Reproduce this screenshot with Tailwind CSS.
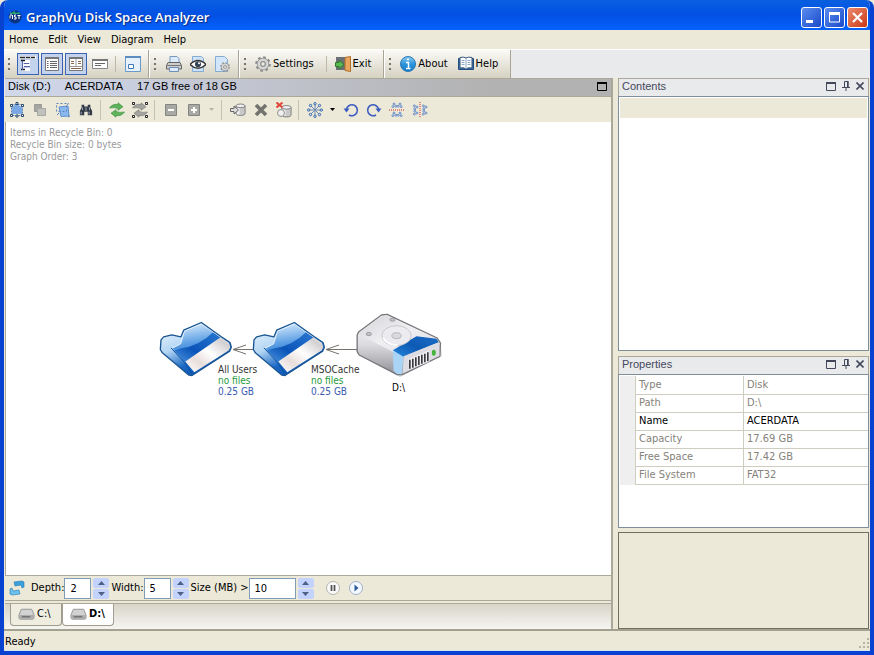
<!DOCTYPE html>
<html lang="en">
<head>
    <meta charset="UTF-8">
    <meta name="viewport" content="width=device-width, initial-scale=1.0">
    <title>GraphVu Disk Space Analyzer</title>
    <script src="https://cdn.jsdelivr.net/npm/@tailwindcss/browser@4"></script>
</head>
<body class="bg-[#ece9d8] font-['DejaVu_Sans_Condensed','DejaVu_Sans',sans-serif] text-[11px] leading-4 text-black">

<!-- Shared icons (kept rendered at zero size, gradients do not work from a hidden svg) -->
<svg class="absolute size-0">
    <defs>
        <linearGradient id="folderFace" x1="0.3" y1="0" x2="0.5" y2="1">
            <stop offset="0" stop-color="#d6eafc"/><stop offset="0.5" stop-color="#5c9fe4"/><stop offset="1" stop-color="#1560c0"/>
        </linearGradient>
        <linearGradient id="folderShade" x1="0" y1="1" x2="1" y2="0">
            <stop offset="0" stop-color="#4a94e2"/><stop offset="0.4" stop-color="#0a54b8"/><stop offset="1" stop-color="#2a78d0"/>
        </linearGradient>
        <linearGradient id="folderBack" x1="0" y1="0" x2="0.6" y2="1">
            <stop offset="0" stop-color="#f4faff"/><stop offset="0.45" stop-color="#b4d6f4"/><stop offset="0.75" stop-color="#1a68c4"/><stop offset="1" stop-color="#0b55b0"/>
        </linearGradient>
        <linearGradient id="folderBand" x1="0" y1="1" x2="1" y2="0">
            <stop offset="0" stop-color="#ffffff"/><stop offset="0.3" stop-color="#e8dedc"/><stop offset="0.55" stop-color="#ffffff"/><stop offset="0.85" stop-color="#d3d0d2"/><stop offset="1" stop-color="#f4f4f6"/>
        </linearGradient>
        <linearGradient id="diskTop" x1="0" y1="0" x2="1" y2="1">
            <stop offset="0" stop-color="#d4d4d8"/><stop offset="0.5" stop-color="#f0f0f3"/><stop offset="1" stop-color="#dcdce0"/>
        </linearGradient>
        <linearGradient id="diskSide" x1="0" y1="0" x2="0" y2="1">
            <stop offset="0" stop-color="#ffffff"/><stop offset="0.5" stop-color="#dcdce0"/><stop offset="1" stop-color="#8f8f96"/>
        </linearGradient>
        <linearGradient id="diskBlue" x1="0" y1="1" x2="1" y2="0">
            <stop offset="0" stop-color="#2a8ae0"/><stop offset="0.5" stop-color="#0d5ab4"/><stop offset="1" stop-color="#1c6cc4"/>
        </linearGradient>
        <linearGradient id="infoBlue" x1="0" y1="0" x2="0" y2="1">
            <stop offset="0" stop-color="#8fd0f4"/><stop offset="0.5" stop-color="#2c94da"/><stop offset="1" stop-color="#1a7cc8"/>
        </linearGradient>

        <symbol id="folder" viewBox="28 50 222 170">
            <path d="M34 106 42 97 66 91 94 97 102 77 155 54 214 96 241 114 245 128 240 140 127 213 118 212 38 145 32 135Z" fill="url(#folderBack)"/>
            <path d="M68 131 93 118 104 80 155 58 213 98 107 171Z" fill="url(#folderFace)"/>
            <path d="M74 138 92 132Q150 124 190 83L213 98 107 171Z" fill="url(#folderShade)"/>
            <path d="M68 131 93 118 104 80 155 58 213 98" fill="none" stroke="#e6f3ff" stroke-width="3"/>
            <path d="M107 171 213 98 238 115 242 128 237 138 134 203Z" fill="url(#folderBand)"/>
            <path d="M64 130 105 174 126 206" fill="none" stroke="#0d4c9c" stroke-width="3"/>
            <path d="M34 106 42 97 66 91 94 97 102 77 155 54 214 96 241 114 245 128 240 140 127 213 118 212 38 145 32 135Z" fill="none" stroke="#1a5592" stroke-width="4" stroke-linejoin="round"/>
        </symbol>
        <symbol id="disk" viewBox="200 22 255 192">
            <path d="M212 146 330 214 456 150 452 108 300 30Z" fill="#9a9aa0" opacity=".45"/>
            <path d="M202 88 207 78 275 28 292 26 442 97 452 112 450 152 337 207 322 207 208 148 202 138Z" fill="url(#diskSide)" stroke="#77777c" stroke-width="4" stroke-linejoin="round"/>
            <path d="M206 86 212 78 277 31 292 30 436 98 320 144Z" fill="url(#diskTop)"/>
            <path d="M309 134 380 92 440 99 447 110 342 152 336 158Z" fill="url(#diskBlue)"/>
            <path d="M309 134 341 153 336 206 322 205 311 196Z" fill="#a9d4f6"/>
            <path d="M342 152 447 110 449 150 338 204Z" fill="#dcdce2"/>
            <path d="M356 160 418 134 419 168 357 192Z" fill="#f0f0f2"/>
            <path d="M360 162v27M369 159v27M378 155v27M387 151v27M396 147v27M405 144v26M414 140v27" stroke="#3a3a40" stroke-width="5"/>
            <ellipse cx="432" cy="141" rx="6" ry="9" fill="#44b43c"/>
            <ellipse cx="320" cy="90" rx="44" ry="30" fill="#ececf0" stroke="#b4b4ba" stroke-width="2"/>
            <ellipse cx="320" cy="90" rx="14" ry="9" fill="#dadade" stroke="#a0a0a6" stroke-width="2"/>
            <path d="M280 96c6 14 24 24 44 22" fill="none" stroke="#fff" stroke-width="5"/>
            <g fill="#c2c2c8" stroke="#85858b" stroke-width="2"><ellipse cx="308" cy="42" rx="8" ry="5"/><ellipse cx="237" cy="85" rx="8" ry="5"/></g>
        </symbol>
        <symbol id="drive" viewBox="0 0 18 12">
            <path d="M3.500 1h11l2.500 6v3q0 1.500-1.500 1.500h-13q-1.500 0-1.500-1.500v-3z" fill="#d2d2d2" stroke="#959595"/>
            <path d="M1.500 7h15v3q0 1-1 1h-13q-1 0-1-1z" fill="#acacac"/><path d="M4 9h9" stroke="#555"/>
        </symbol>
        <symbol id="gear" viewBox="0 0 16 16">
            <circle cx="8" cy="8" r="6.600" fill="none" stroke="#8c8c8c" stroke-width="2.400" stroke-dasharray="2.600 2.580"/>
            <circle cx="8" cy="8" r="4.200" fill="none" stroke="#8c8c8c" stroke-width="4"/>
            <circle cx="8" cy="8" r="4.200" fill="none" stroke="#d6d6d6" stroke-width="2.600"/>
            <circle cx="8" cy="8" r="2.200" fill="#efeee6" stroke="#8c8c8c"/>
        </symbol>
        <symbol id="float" viewBox="0 0 10 9"><path d="M.5.5h9v8h-9z" fill="none" stroke="currentColor"/><path d="M0 0h10v2H0z" fill="currentColor"/></symbol>
        <symbol id="pin" viewBox="0 0 8 10"><path d="M2.500 6V.5h3.500V6M0 6.500h8M4 7v3" fill="none" stroke="currentColor"/><path d="M5 0h1.500v6H5z" fill="currentColor"/></symbol>
        <symbol id="cross" viewBox="0 0 8 8"><path d="M.5.5l7 7M7.500.5l-7 7" stroke="currentColor" stroke-width="1.600"/></symbol>
        <symbol id="handles" viewBox="0 0 16 16">
            <g fill="#fff" stroke="#28486c"><path d="M1.500 2.500h2v2h-2zM7 .5h2v2H7zM12.500 2.500h2v2h-2zM1.500 12.500h2v2h-2zM7 13h2v2H7zM12.500 12.500h2v2h-2z"/></g>
        </symbol>
        <symbol id="arrows" viewBox="0 0 16 16">
            <path d="M.5 6q3-4.500 8.500-3.500V.8l5 4-5 3.500V6.500Q5 5 .5 6z"/><path d="M15.500 10q-3 4.500-8.500 3.500v1.700l-5-4 5-3.500v1.800q4 1.500 8.500.5z"/>
        </symbol>
        <symbol id="bin" viewBox="0 0 12 14"><path d="M1 3v8q0 2.500 5 2.500t5-2.500V3z" fill="#c8c8c8" stroke="#7c7c7c"/><path d="M2 4.500v7q1 1 3 1V5z" fill="#f0f0f0"/><ellipse cx="6" cy="3" rx="5" ry="2" fill="#f0f0f0" stroke="#7c7c7c"/></symbol>
        <symbol id="nodes" viewBox="0 0 16 8"><g fill="#d8e8fa" stroke="#4a74b8"><circle cx="4" cy="2" r="1.300"/><circle cx="12" cy="2" r="1.300"/><circle cx="2.500" cy="5.500" r="1.300"/><circle cx="6.500" cy="5" r="1.300"/><circle cx="9.500" cy="5" r="1.300"/><circle cx="13.500" cy="5.500" r="1.300"/></g></symbol>
        <symbol id="grip" viewBox="0 0 3 12"><path d="M0 0h2v2H0zM0 5h2v2H0zM0 10h2v2H0z" fill="#77756a"/></symbol>
    </defs>
</svg>

<div class="flex h-screen flex-col overflow-hidden rounded-t-lg border-4 border-t-0 border-[#0842d0] bg-[#ece9d8]">

    <!-- Title bar -->
    <header class="-mx-1 flex h-[30px] shrink-0 items-center bg-linear-to-b from-[#0a5fe0] via-[#0350e4] to-[#0562fc] pr-1.5 pl-2">
        <svg class="mt-1 mr-1 size-3.5" viewBox="0 0 14 14"><circle cx="7" cy="7" r="6.500" fill="#0b3480"/><path d="M2 2l2 1 2-2 2 2 3-1 1 2H2z" fill="#2aa878"/><path d="M2 5.500v3M4.500 5v4M2 5h2M8 5H6.500v2H8v2H6M9.500 5.500h3M11 5.500V9" stroke="#fff" fill="none"/></svg>
        <h1 class="mt-1 font-['Open_Sans',sans-serif] text-[13px] font-semibold text-white [text-shadow:1px_1px_1px_#0a2a80]">GraphVu Disk Space Analyzer</h1>
        <div class="mt-1 ml-auto flex gap-0.5">
            <button aria-label="Minimize" class="size-[21px] rounded-[3px] border border-white bg-linear-to-br from-[#5b8cf0] to-[#1a48c8]"><svg viewBox="0 0 19 19"><path d="M4 12h7v3H4z" fill="#fff"/></svg></button>
            <button aria-label="Maximize" class="size-[21px] rounded-[3px] border border-white bg-linear-to-br from-[#5b8cf0] to-[#1a48c8]"><svg viewBox="0 0 19 19"><path d="M4.500 5h10v9h-10z" fill="none" stroke="#fff"/><path d="M4 4h11v3H4z" fill="#fff"/></svg></button>
            <button aria-label="Close" class="size-[21px] rounded-[3px] border border-white bg-linear-to-br from-[#ec8a6c] to-[#c83410]"><svg viewBox="0 0 19 19"><path d="M5 5l9 9M14 5l-9 9" stroke="#fff" stroke-width="2.200"/></svg></button>
        </div>
    </header>

    <!-- Menu -->
    <nav class="flex h-5 shrink-0 items-center gap-2.5 border-b border-white px-[5px]">
        <a href="#">Home</a>
        <a href="#">Edit</a>
        <a href="#">View</a>
        <a href="#">Diagram</a>
        <a href="#">Help</a>
    </nav>

    <!-- Main toolbar -->
    <div class="flex h-7 shrink-0 bg-[#e9eaec]">
        <div class="flex items-center border-r border-[#a8a594] bg-linear-to-b from-[#fbfaf6] to-[#d5d2c2] pr-1 pl-1">
            <svg class="mr-1.5 h-3 w-[3px]"><use href="#grip"/></svg>
            <div class="flex gap-0.5">
                <button aria-label="Tree" class="grid size-[22px] place-items-center border border-[#3c64b4] bg-[#c3d3ee]"><svg class="size-4" viewBox="0 0 16 16"><path d="M0 0h5v3H0zM6 0h4v3H6zM11 0h5v3h-5zM2 4h8v3H2zM2 8h8v3H2zM2 12h8v3H2z" fill="#fff"/><path d="M0 1.500h5M6 1.500h4M11 1.500h4M1 4.500h4M1 13.500h4" stroke="#222" stroke-width="1.500"/><path d="M2.500 5v9M4 7.500h5M4 10.500h6" stroke="#5560a8"/></svg></button>
                <button aria-label="List" class="grid size-[22px] place-items-center border border-[#3c64b4] bg-[#c3d3ee]"><svg class="size-4" viewBox="0 0 16 16"><path d="M1.500 1.500h13v13h-13z" fill="#fff" stroke="#777"/><path d="M1 2h14" stroke="#777" stroke-width="2"/><path d="M3 5.500h1.500M6 5.500h7M3 7.500h1.500M6 7.500h7M3 9.500h1.500M6 9.500h7M3 11.500h1.500M6 11.500h7" stroke="#666"/></svg></button>
                <button aria-label="Columns" class="grid size-[22px] place-items-center border border-[#3c64b4] bg-[#c3d3ee]"><svg class="size-4" viewBox="0 0 16 16"><path d="M1.500 1.500h13v13h-13z" fill="#fff" stroke="#777"/><path d="M1 2h14" stroke="#777" stroke-width="2"/><path d="M8 3v7M2 10.500h12" stroke="#999"/><path d="M3 5.500h3M10 5.500h3M3 7.500h3M10 7.500h3M3 12.500h10" stroke="#86664e"/></svg></button>
                <button aria-label="Caption" class="grid size-[22px] place-items-center"><svg class="size-4" viewBox="0 0 16 16"><path d="M.5 3.500h15v9H.5z" fill="#fff" stroke="#888"/><path d="M0 4h16" stroke="#777" stroke-width="2"/><path d="M3 7.500h10M3 9.500h6" stroke="#666"/></svg></button>
            </div>
            <span class="mx-1 h-4 w-px bg-[#bdbaa9]"></span>
            <button aria-label="Overview" class="ml-0.5 grid size-[22px] place-items-center"><svg class="size-4" viewBox="0 0 16 16"><path d="M.5.5h15v15H.5z" fill="#e6f1fc" stroke="#6a9bc8"/><path d="M0 1h16" stroke="#5c8cc0" stroke-width="2"/><path d="M3.500 8.500h5v4h-5z" fill="#fff" stroke="#4078b4"/></svg></button>
        </div>
        <div class="flex items-center border-r border-l border-r-[#a8a594] border-l-white bg-linear-to-b from-[#fbfaf6] to-[#d5d2c2] pr-1 pl-1">
            <svg class="mr-[5px] h-3 w-[3px]"><use href="#grip"/></svg>
            <button aria-label="Print" class="grid size-6 place-items-center"><svg class="size-4" viewBox="0 0 16 16"><path d="M4 7V.5h7l2 2V7" fill="#dceafa" stroke="#7898c0"/><path d="M2 6.500h12l1.500 3v3.500H.5V9.500z" fill="#ccc" stroke="#666"/><path d="M1 9.500h14" stroke="#777"/><path d="M3.500 11.500h9v4h-9z" fill="#dceafa" stroke="#6d8db8"/></svg></button>
            <button aria-label="Print preview" class="grid size-6 place-items-center"><svg class="size-4" viewBox="0 0 16 16"><path d="M2.500.5h9l2 2v13h-11z" fill="#cfe3f8" stroke="#86acd4"/><path d="M0 8.500q8-8 16 0-8 7.500-16 0z" fill="#fff" stroke="#333" stroke-width="1.400"/><circle cx="8" cy="8.200" r="3" fill="#345"/><circle cx="9" cy="7.200" r="1" fill="#fff"/></svg></button>
            <button aria-label="Page setup" class="grid size-6 place-items-center"><svg class="size-4" viewBox="0 0 16 16"><path d="M1.500.5h9l3 3v12h-12z" fill="#d3e6fa" stroke="#86acd4"/><use href="#gear" x="6" y="6" width="10" height="10"/></svg></button>
        </div>
        <div class="flex items-center border-r border-l border-r-[#a8a594] border-l-white bg-linear-to-b from-[#fbfaf6] to-[#d5d2c2] pr-3 pl-1">
            <svg class="mr-2 h-3 w-[3px]"><use href="#grip"/></svg>
            <button class="flex items-center gap-0.5"><svg class="size-4"><use href="#gear"/></svg>Settings</button>
            <span class="mr-2 ml-3 h-4 w-px bg-[#bdbaa9]"></span>
            <button class="flex items-center gap-0.5"><svg class="size-4" viewBox="0 0 16 16"><path d="M1 1h12v13H1z" fill="#6c7076"/><path d="M10 1.500l5.500-1v15l-5.500-1z" fill="#eaa65c" stroke="#b06e28"/><path d="M.5 6.500H4V4l5 4.500L4 13v-2.500H.5z" fill="#5cb850" stroke="#2c7c28"/></svg>Exit</button>
        </div>
        <div class="flex items-center border-r border-l border-r-[#a8a594] border-l-white bg-linear-to-b from-[#fbfaf6] to-[#d5d2c2] pr-3 pl-1">
            <svg class="mr-2 h-3 w-[3px]"><use href="#grip"/></svg>
            <button class="flex items-center gap-0.5"><svg class="size-4" viewBox="0 0 16 16"><circle cx="8" cy="8" r="7.500" fill="url(#infoBlue)" stroke="#2878b4"/><path d="M6 6.500h2.500V12M6 12.500h4.500M7 3.500h2" fill="none" stroke="#fff" stroke-width="1.500"/></svg>About</button>
            <button class="ml-2.5 flex items-center gap-0.5"><svg class="size-4" viewBox="0 0 16 16"><path d="M.5 2.500h15v11H.5z" fill="#3c6ca4" stroke="#244c80"/><path d="M2 1.500q4-1 6 .5 2-1.500 6-.5V12q-4-1-6 1-2-2-6-1z" fill="#fff" stroke="#34587c"/><path d="M8 2v11M3.500 4.500h3M3.500 6.500h3M3.500 8.500h3M9.500 4.500h3M9.500 6.500h3M9.500 8.500h3" stroke="#8ca8c8"/></svg>Help</button>
        </div>
    </div>

    <div class="flex min-h-0 flex-1 gap-[5px] border-b-2 border-[#a3a18f] pr-px pl-px">

        <!-- Diagram panel -->
        <main class="flex min-w-0 flex-1 flex-col border-t border-r-2 border-[#aca899]">
            <div class="flex h-[17px] shrink-0 items-center bg-linear-to-r from-[#d0d8ea] from-0% via-[#c6cad8] via-30% to-[#b2b2b2] to-80% pr-1 pb-[3px] pl-[3px] whitespace-pre font-['Liberation_Sans',sans-serif]">
                <span>Disk (D:)</span><span class="ml-3.5">ACERDATA</span><span class="ml-3.5">17 GB free of 18 GB</span>
                <button aria-label="Maximize diagram" class="ml-auto"><svg class="h-[9px] w-2.5"><use href="#float"/></svg></button>
            </div>
            <div class="flex h-[26px] shrink-0 items-center border-t border-[#aca899] bg-[#ece9d8]">
                <button aria-label="Select all" class="grid h-6 w-[23px] place-items-center"><svg class="size-4" viewBox="0 0 16 16"><path d="M3 5l4-3 6 3v7H3z" fill="#7aa8e4"/><path d="M2.500 2.500h11v11h-11z" fill="none" stroke="#5880b8" stroke-dasharray="2 1"/><use href="#handles"/></svg></button>
                <button aria-label="Copy" class="grid h-6 w-[23px] place-items-center"><svg class="size-4" viewBox="0 0 16 16"><path d="M2.500 2.500h7v7h-7z" fill="#a4a4a0" stroke="#9a9a96"/><path d="M5.500 6.500h8v7h-8z" fill="#c0c0bc" stroke="#a8a8a4"/></svg></button>
                <button aria-label="Fit" class="grid h-6 w-[23px] place-items-center"><svg class="size-4" viewBox="0 0 16 16"><path d="M4 5l9-1 1 10-8 .5z" fill="#8cb8f0" stroke="#6090d0"/><path d="M1.500 1.500h10v8h-10z" fill="none" stroke="#5c84b8" stroke-dasharray="2 2"/><path d="M12 2.500l2-1M2 13l2-2M13 15l2-1" stroke="#5c84b8"/></svg></button>
                <button aria-label="Find" class="grid h-6 w-[23px] place-items-center"><svg class="size-3.5" viewBox="0 0 16 16"><path d="M3 2h3v2h4V2h3v3l2 4v5h-5v-4H6v4H1V9l2-4z" fill="#333b46"/><path d="M4 5v3M12 5v3M2.500 10v3M11.500 10v3M8 5v4" stroke="#aab4c4"/></svg></button>
                <span class="mr-1 ml-[3px] h-5 w-px bg-[#c6c3b0]"></span>
                <button aria-label="Refresh" class="grid h-6 w-[23px] place-items-center"><svg class="size-4 fill-[#5eb45a] stroke-[#37893a] stroke-[.6]"><use href="#arrows"/></svg></button>
                <button aria-label="Refresh selected" class="grid h-6 w-[23px] place-items-center"><svg class="size-4 fill-[#a4a4a0] stroke-[#747470] stroke-[.6]" viewBox="0 0 16 16"><use href="#arrows"/><g fill="#fff" stroke="#222" stroke-width="1"><path d="M.5.5h2v2h-2zM13.500.5h2v2h-2zM.5 13.500h2v2h-2zM13.500 13.500h2v2h-2z"/></g></svg></button>
                <span class="mr-1 ml-[3px] h-5 w-px bg-[#c6c3b0]"></span>
                <button aria-label="Collapse" class="grid h-6 w-[23px] place-items-center"><svg class="size-3" viewBox="0 0 12 12"><path d="M.5.5h11v11H.5z" fill="#a8a8a4" stroke="#848480"/><path d="M3 6h6" stroke="#fff" stroke-width="2"/></svg></button>
                <button aria-label="Expand" class="grid h-6 w-[23px] place-items-center"><svg class="size-3" viewBox="0 0 12 12"><path d="M.5.5h11v11H.5z" fill="#a8a8a4" stroke="#848480"/><path d="M3 6h6M6 3v6" stroke="#fff" stroke-width="2"/></svg></button>
                <button aria-label="Expand options" class="grid h-6 w-[13px] place-items-center"><svg class="h-[3px] w-[5px]" viewBox="0 0 5 3"><path d="M0 0h5L2.500 3z" fill="#b8b5a4"/></svg></button>
                <span class="mr-1 ml-[3px] h-5 w-px bg-[#c6c3b0]"></span>
                <button aria-label="Move to recycle bin" class="grid h-6 w-[23px] place-items-center"><svg class="size-4" viewBox="0 0 16 16"><use href="#bin" x="5" y="0" width="11" height="15"/><path d="M.5 6.500H4V4l4.500 4L4 12V9.500H.5z" fill="#ddd" stroke="#666"/></svg></button>
                <button aria-label="Delete" class="grid h-6 w-[23px] place-items-center"><svg class="size-4" viewBox="0 0 16 16"><path d="M3 3l10 10M13 3L3 13" stroke="#73736f" stroke-width="3.600"/></svg></button>
                <button aria-label="Empty recycle bin" class="grid h-6 w-[23px] place-items-center"><svg class="size-4" viewBox="0 0 16 16"><use href="#bin" x="5" y="2" width="11" height="14"/><path d="M.5.5l6 5M6.500.5l-6 5" stroke="#e0483c" stroke-width="2"/><circle cx="5" cy="11" r="3.500" fill="#eee" stroke="#909090"/></svg></button>
                <span class="mr-1 ml-[3px] h-5 w-px bg-[#c6c3b0]"></span>
                <button aria-label="Layout" class="grid h-6 w-[23px] place-items-center"><svg class="size-4" viewBox="0 0 16 16"><path d="M8 2v12M2 8h12M4 4l8 8M12 4l-8 8" stroke="#6c8cb8"/><g fill="#cfe2f8" stroke="#3c68a8"><circle cx="8" cy="1.700" r="1.200"/><circle cx="8" cy="14.300" r="1.200"/><circle cx="1.700" cy="8" r="1.200"/><circle cx="14.300" cy="8" r="1.200"/><circle cx="3.500" cy="3.500" r="1.200"/><circle cx="12.500" cy="3.500" r="1.200"/><circle cx="3.500" cy="12.500" r="1.200"/><circle cx="12.500" cy="12.500" r="1.200"/></g></svg></button>
                <button aria-label="Layout options" class="grid h-6 w-[13px] place-items-center"><svg class="h-[3px] w-[5px]" viewBox="0 0 5 3"><path d="M0 0h5L2.500 3z"/></svg></button>
                <button aria-label="Rotate left" class="grid h-6 w-[23px] place-items-center"><svg class="size-4" viewBox="0 0 16 16"><path d="M3.500 7A5.500 5.500 0 1 1 6 13" fill="none" stroke="#3c5cc0" stroke-width="1.600"/><path d="M.5 6.500h6l-3 4z" fill="#3c5cc0"/></svg></button>
                <button aria-label="Rotate right" class="grid h-6 w-[23px] place-items-center"><svg class="size-4" viewBox="0 0 16 16"><path d="M12.500 7A5.500 5.500 0 1 0 10 13" fill="none" stroke="#3c5cc0" stroke-width="1.600"/><path d="M15.500 6.500h-6l3 4z" fill="#3c5cc0"/></svg></button>
                <button aria-label="Flip vertical" class="grid h-6 w-[23px] place-items-center"><svg class="size-4" viewBox="0 0 16 16"><use href="#nodes" x="2" y="0" width="12" height="7"/><use href="#nodes" x="2" y="9" width="12" height="7"/><path d="M0 8h16" stroke="#d02828" stroke-dasharray="1 1"/></svg></button>
                <button aria-label="Flip horizontal" class="grid h-6 w-[23px] place-items-center"><svg class="size-4" viewBox="0 0 16 16"><g transform="rotate(90 8 8)"><use href="#nodes" x="2" y="0" width="12" height="7"/><use href="#nodes" x="2" y="9" width="12" height="7"/></g><path d="M8 0v16" stroke="#d02828" stroke-dasharray="1 1"/></svg></button>
            </div>

            <div class="relative min-h-0 flex-1 border-l border-[#aca899] bg-white">
                <p class="px-1 py-[5px] text-[10px] leading-3 text-[#9a9a9a]">Items in Recycle Bin: 0<br>Recycle Bin size: 0 bytes<br>Graph Order: 3</p>

                <svg class="absolute top-[221px] left-[227px] h-3 w-6" viewBox="0 0 24 12"><path d="M0 6.500h24M13 2L0 6.500 13 11" fill="none" stroke="#77736c"/></svg>
                <svg class="absolute top-[221px] left-[320px] h-3 w-8" viewBox="0 0 32 12"><path d="M0 6.500h32M13 2L0 6.500 13 11" fill="none" stroke="#77736c"/></svg>
                <svg class="absolute top-[199px] left-[153px] h-[57px] w-[74px]"><use href="#folder"/></svg>
                <svg class="absolute top-[199px] left-[246px] h-[57px] w-[74px]"><use href="#folder"/></svg>
                <svg class="absolute top-[191px] left-[350px] h-16 w-[86px]"><use href="#disk"/></svg>
                <p class="absolute top-[242px] left-[212px] text-[10px] leading-[11px] text-[#333]">All Users<br><span class="text-[#1f9a3c]">no files</span><br><span class="text-[#3a5ab0]">0.25 GB</span></p>
                <p class="absolute top-[242px] left-[305px] text-[10px] leading-[11px] text-[#333]">MSOCache<br><span class="text-[#1f9a3c]">no files</span><br><span class="text-[#3a5ab0]">0.25 GB</span></p>
                <p class="absolute top-[260px] left-[386px] text-[10px] leading-[11px]">D:\</p>
            </div>

            <form class="flex h-[26px] shrink-0 items-center border-y border-[#aca899] bg-[#ece9d8] pl-1">
                <svg class="mr-1.5 size-4" viewBox="0 0 16 16"><path d="M5 2l8-1 2 1v5l-2 1-1-3-6 1z" fill="#3ca0dc" stroke="#2078b4" stroke-width=".6"/><path d="M11 14l-8 1-2-1V9l2-1 1 3 6-1z" fill="#6cc0ec" stroke="#2078b4" stroke-width=".6"/></svg>
                <label for="depth">Depth:</label>
                <input id="depth" value="2" class="h-[21px] w-[27px] border border-[#7f9db9] bg-white pl-[5px]">
                <span class="mx-0.5 flex w-4 flex-col gap-px">
                    <button type="button" aria-label="More depth" class="grid h-2.5 place-items-center rounded-xs bg-[#c3d3fd]"><svg class="h-1 w-[7px]" viewBox="0 0 7 4"><path d="M0 4h7L3.500 0z" fill="#4d6185"/></svg></button>
                    <button type="button" aria-label="Less depth" class="grid h-2.5 place-items-center rounded-xs bg-[#c3d3fd]"><svg class="h-1 w-[7px]" viewBox="0 0 7 4"><path d="M0 0h7L3.500 4z" fill="#4d6185"/></svg></button>
                </span>
                <label for="width">Width:</label>
                <input id="width" value="5" class="h-[21px] w-[27px] border border-[#7f9db9] bg-white pl-[5px]">
                <span class="mx-0.5 flex w-4 flex-col gap-px">
                    <button type="button" aria-label="More width" class="grid h-2.5 place-items-center rounded-xs bg-[#c3d3fd]"><svg class="h-1 w-[7px]" viewBox="0 0 7 4"><path d="M0 4h7L3.500 0z" fill="#4d6185"/></svg></button>
                    <button type="button" aria-label="Less width" class="grid h-2.5 place-items-center rounded-xs bg-[#c3d3fd]"><svg class="h-1 w-[7px]" viewBox="0 0 7 4"><path d="M0 0h7L3.500 4z" fill="#4d6185"/></svg></button>
                </span>
                <label for="size">Size (MB) &gt;</label>
                <input id="size" value="10" class="h-[21px] w-[47px] border border-[#7f9db9] bg-white pl-[5px]">
                <span class="mx-0.5 flex w-4 flex-col gap-px">
                    <button type="button" aria-label="More size" class="grid h-2.5 place-items-center rounded-xs bg-[#c3d3fd]"><svg class="h-1 w-[7px]" viewBox="0 0 7 4"><path d="M0 4h7L3.500 0z" fill="#4d6185"/></svg></button>
                    <button type="button" aria-label="Less size" class="grid h-2.5 place-items-center rounded-xs bg-[#c3d3fd]"><svg class="h-1 w-[7px]" viewBox="0 0 7 4"><path d="M0 0h7L3.500 4z" fill="#4d6185"/></svg></button>
                </span>
                <button type="button" aria-label="Pause" class="ml-2.5 size-3.5"><svg viewBox="0 0 14 14"><circle cx="7" cy="7" r="6.500" fill="#fafafa" stroke="#b4b4ac"/><path d="M5.500 4v6M8.500 4v6" stroke="#555" stroke-width="1.800"/></svg></button>
                <button type="button" aria-label="Play" class="ml-[9px] size-3.5"><svg viewBox="0 0 14 14"><circle cx="7" cy="7" r="6.500" fill="#f4f9ff" stroke="#9cb2ce"/><path d="M5.500 3.500L9.500 7l-4 3.500z" fill="#2c5c9c"/></svg></button>
            </form>

            <div class="mt-0.5 flex h-[26px] shrink-0 items-start border-t border-[#aca899] bg-linear-to-b from-[#d8d5c8] to-[#f6f5f1] pl-[5px]">
                <button class="flex h-[22px] w-[52px] items-center gap-0.5 rounded-b-[4px] border border-t-0 border-[#a09d8e] bg-[#efece0] pb-0.5 pl-[7px]"><svg class="h-3 w-[17px]"><use href="#drive"/></svg>C:\</button>
                <button class="flex h-[22px] w-[52px] items-center gap-0.5 rounded-b-[4px] border border-t-0 border-[#a09d8e] bg-white pb-0.5 pl-[7px] font-bold"><svg class="h-3 w-[17px]"><use href="#drive"/></svg>D:\</button>
            </div>
        </main>

        <!-- Side panels -->
        <aside class="flex w-[251px] shrink-0 flex-col">
            <section class="flex min-h-0 flex-1 flex-col">
                <div class="flex h-[18px] shrink-0 items-center gap-1.5 border border-b-0 border-[#aca899] bg-[#e9eaec] pr-1 pb-[3px] pl-[3px] text-[#44485c]">
                    <h2 class="mr-auto font-['Liberation_Sans',sans-serif]">Contents</h2>
                    <button aria-label="Float contents"><svg class="h-[9px] w-2.5"><use href="#float"/></svg></button>
                    <button aria-label="Pin contents"><svg class="h-2.5 w-2"><use href="#pin"/></svg></button>
                    <button aria-label="Close contents"><svg class="size-2"><use href="#cross"/></svg></button>
                </div>
                <div class="min-h-0 flex-1 border border-[#7f8e9a] bg-white p-px"><div class="h-5 bg-[#ece9d8]"></div></div>
            </section>
            <section class="mt-[5px] flex h-[172px] shrink-0 flex-col">
                <div class="flex h-[18px] shrink-0 items-center gap-1.5 border border-b-0 border-[#aca899] bg-[#e9eaec] pr-1 pb-[3px] pl-[3px] text-[#44485c]">
                    <h2 class="mr-auto font-['Liberation_Sans',sans-serif]">Properties</h2>
                    <button aria-label="Float properties"><svg class="h-[9px] w-2.5"><use href="#float"/></svg></button>
                    <button aria-label="Pin properties"><svg class="h-2.5 w-2"><use href="#pin"/></svg></button>
                    <button aria-label="Close properties"><svg class="size-2"><use href="#cross"/></svg></button>
                </div>
                <div class="min-h-0 flex-1 border border-[#7f8e9a] bg-white pt-px pl-px">
                    <div class="border-l-[15px] border-[#efefef]">
                        <table class="w-full table-fixed text-left text-[#85827a]">
                            <tr class="h-[18px] border-b border-[#cfccc0]"><th class="w-[108px] border-x border-[#cfccc0] pl-[3px] font-normal">Type</th><td class="pl-[3px]">Disk</td></tr>
                            <tr class="h-[18px] border-b border-[#cfccc0]"><th class="border-x border-[#cfccc0] pl-[3px] font-normal">Path</th><td class="pl-[3px]">D:\</td></tr>
                            <tr class="h-[18px] border-b border-[#cfccc0] text-black"><th class="border-x border-[#cfccc0] pl-[3px] font-normal">Name</th><td class="pl-[3px]">ACERDATA</td></tr>
                            <tr class="h-[18px] border-b border-[#cfccc0]"><th class="border-x border-[#cfccc0] pl-[3px] font-normal">Capacity</th><td class="pl-[3px]">17.69 GB</td></tr>
                            <tr class="h-[18px] border-b border-[#cfccc0]"><th class="border-x border-[#cfccc0] pl-[3px] font-normal">Free Space</th><td class="pl-[3px]">17.42 GB</td></tr>
                            <tr class="h-[18px] border-b border-[#cfccc0]"><th class="border-x border-[#cfccc0] pl-[3px] font-normal">File System</th><td class="pl-[3px]">FAT32</td></tr>
                        </table>
                    </div>
                </div>
            </section>
            <div class="mt-1 h-[97px] shrink-0 border border-[#716f64]"></div>
        </aside>
    </div>

    <!-- Status bar -->
    <footer class="flex h-5 shrink-0 items-center justify-between border-b border-[#d8e4f8] pt-[3px] pl-px">
        <span>Ready</span>
        <svg class="mt-1 size-3" viewBox="0 0 12 12"><path d="M9 0h2v2H9zM5 4h2v2H5zM9 4h2v2H9zM1 8h2v2H1zM5 8h2v2H5zM9 8h2v2H9z" fill="#b8b4a2"/></svg>
    </footer>
</div>
</body>
</html>
